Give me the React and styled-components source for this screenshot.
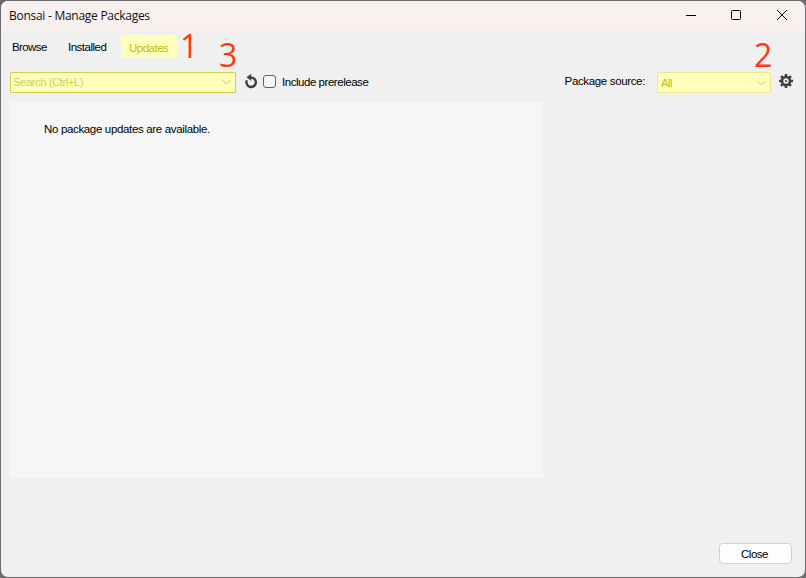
import React from 'react';
import styled, { createGlobalStyle } from 'styled-components';

const GlobalStyle = createGlobalStyle`
  * { box-sizing: border-box; }
  html, body { margin: 0; padding: 0; }
  body { background: #6c6a6a; overflow: hidden; }
`;

const Window = styled.main`
  position: relative;
  width: 806px;
  height: 578px;
  display: flex;
  flex-direction: column;
  border: 1px solid #6c6a6a;
  border-radius: 8px;
  overflow: hidden;
  background: #f0f0f0;
  color: #000;
  font: 11.5px/14px "Liberation Sans", Arial, sans-serif;
`;

const TitleBar = styled.header`
  display: flex;
  align-items: center;
  height: 30px;
  flex: none;
  padding-left: 8px;
  background: #f9f1ef;
`;

const Label = styled.span`
  white-space: nowrap;
  letter-spacing: ${(p) => p.$spacing || 0}px;
`;

const Title = styled(Label)`
  flex: 1;
  font: 12px/16px "Open Sans", "Noto Sans", sans-serif;
  color: #111;
`;

const Caption = styled.button`
  width: ${(p) => p.$width || 46}px;
  height: 30px;
  padding: 0 0 2px;
  border: 0;
  background: none;
  display: grid;
  place-items: center;
`;

const Captions = styled.div`
  display: flex;
`;

const Tabs = styled.nav`
  display: flex;
  height: 23px;
  margin-top: 4px;
  padding-left: 11px;
`;

const Tab = styled.div`
  width: ${(p) => p.$width}px;
  padding-top: ${(p) => (p.$active ? 6 : 5)}px;
  padding-left: ${(p) => (p.$active ? 8 : 0)}px;
  color: ${(p) => (p.$active ? '#bfbf00' : '#000')};
  background: ${(p) => (p.$active ? '#ffffbc' : 'transparent')};
`;

const Toolbar = styled.div`
  display: flex;
  align-items: center;
  height: 21px;
  margin-top: 14px;
  padding: 0 12px 0 9px;
`;

const Combo = styled.div`
  display: flex;
  align-items: center;
  justify-content: space-between;
  width: ${(p) => p.$width}px;
  height: 21px;
  padding: 0 4px ${(p) => (p.$focus ? 2 : 0)}px ${(p) => (p.$focus ? 2 : 3)}px;
  border: 1px solid ${(p) => (p.$focus ? '#d0d050' : '#e8e88c')};
  border-radius: 1px;
  background: #ffffbc;
  color: ${(p) => (p.$focus ? '#cfcf63' : '#bfbf20')};
`;

const Refresh = styled.span`
  display: flex;
  margin: 0 5px 3px 8px;
`;

const Checkbox = styled.span`
  width: 13px;
  height: 13px;
  margin: 0 6px 2px 0;
  border: 1px solid #626262;
  border-radius: 3px;
  background: #f5f5f5;
`;

const CheckLabel = styled(Label)`
  padding-bottom: 2px;
`;

const Source = styled.div`
  display: flex;
  align-items: center;
  gap: 12px;
  margin-left: auto;
  margin-right: 8px;
`;

const SourceLabel = styled(Label)`
  padding-bottom: 4px;
`;

const Settings = styled.span`
  display: flex;
  padding-bottom: 3px;
`;

const Results = styled.section`
  width: 533px;
  height: 376px;
  flex: none;
  margin: 9px 0 0 9px;
  padding: 20px 0 0 34px;
  background: #f6f6f6;
`;

const Footer = styled.footer`
  display: flex;
  justify-content: flex-end;
  margin-top: 65px;
  padding-right: 13px;
`;

const Button = styled.button`
  width: 73px;
  height: 21px;
  padding: 0 2px 0 0;
  border: 1px solid #d0d0d0;
  border-radius: 4px;
  background: #fdfdfd;
  color: #000;
  font: inherit;
`;

const Callout = styled.span`
  position: absolute;
  left: ${(p) => p.$x}px;
  top: ${(p) => p.$y}px;
  color: #ff3a10;
  font: 32px/40px "Open Sans", "Noto Sans", sans-serif;
`;

const Chevron = ({ color }) => (
  <svg width="9" height="6" viewBox="0 0 9 6" fill="none" stroke={color}>
    <path d="M.5 1 4.5 5 8.5 1" />
  </svg>
);

const RefreshIcon = () => (
  <svg width="14" height="16" viewBox="0 0 14 16" fill="none">
    <path d="M5.5 4.6H7.6A4.7 4.7 0 1 1 2.9 7.3" stroke="#404040" strokeWidth="2.4" />
    <path d="M7.2 .8V7.9L2.6 4.3Z" fill="#404040" />
  </svg>
);

const GearIcon = () => (
  <svg width="14" height="14" viewBox="-7 -7 14 14">
    <g fill="#404040">
      {[0, 45, 90, 135].map((a) => (
        <rect key={a} x="-1.3" y="-7" width="2.6" height="14" transform={`rotate(${a})`} />
      ))}
      <circle r="5.2" />
    </g>
    <circle r="2.7" fill="#f0f0f0" />
    <circle r="1.1" fill="#404040" />
  </svg>
);

export default function App() {
  return (
    <>
      <GlobalStyle />
      <Window>
        <TitleBar>
          <Title $spacing={-0.27}>Bonsai - Manage Packages</Title>
          <Captions>
            <Caption $width={44} aria-label="Minimize">
              <svg width="10" height="10"><path d="M0 5.5H10" stroke="#000" /></svg>
            </Caption>
            <Caption aria-label="Maximize">
              <svg width="10" height="10"><rect x=".5" y=".5" width="9" height="9" rx="1" fill="none" stroke="#000" /></svg>
            </Caption>
            <Caption aria-label="Close window">
              <svg width="10" height="10"><path d="M0 0 10 10M10 0 0 10" stroke="#000" /></svg>
            </Caption>
          </Captions>
        </TitleBar>
        <Tabs>
          <Tab $width={56}><Label $spacing={-0.6}>Browse</Label></Tab>
          <Tab $width={53}><Label $spacing={-0.5}>Installed</Label></Tab>
          <Tab $width={57} $active><Label $spacing={-0.5}>Updates</Label></Tab>
        </Tabs>
        <Toolbar>
          <Combo $width={226} $focus>
            <Label $spacing={-0.55}>Search (Ctrl+L)</Label>
            <Chevron color="#c4c448" />
          </Combo>
          <Refresh><RefreshIcon /></Refresh>
          <Checkbox />
          <CheckLabel $spacing={-0.46}>Include prerelease</CheckLabel>
          <Source>
            <SourceLabel $spacing={-0.35}>Package source:</SourceLabel>
            <Combo $width={114}>
              <Label $spacing={-0.6}>All</Label>
              <Chevron color="#cccc50" />
            </Combo>
          </Source>
          <Settings><GearIcon /></Settings>
        </Toolbar>
        <Results><Label $spacing={-0.34}>No package updates are available.</Label></Results>
        <Footer><Button><Label $spacing={-0.5}>Close</Label></Button></Footer>
        <Callout $x={179} $y={25}>1</Callout>
        <Callout $x={753} $y={34}>2</Callout>
        <Callout $x={218} $y={34}>3</Callout>
      </Window>
    </>
  );
}
